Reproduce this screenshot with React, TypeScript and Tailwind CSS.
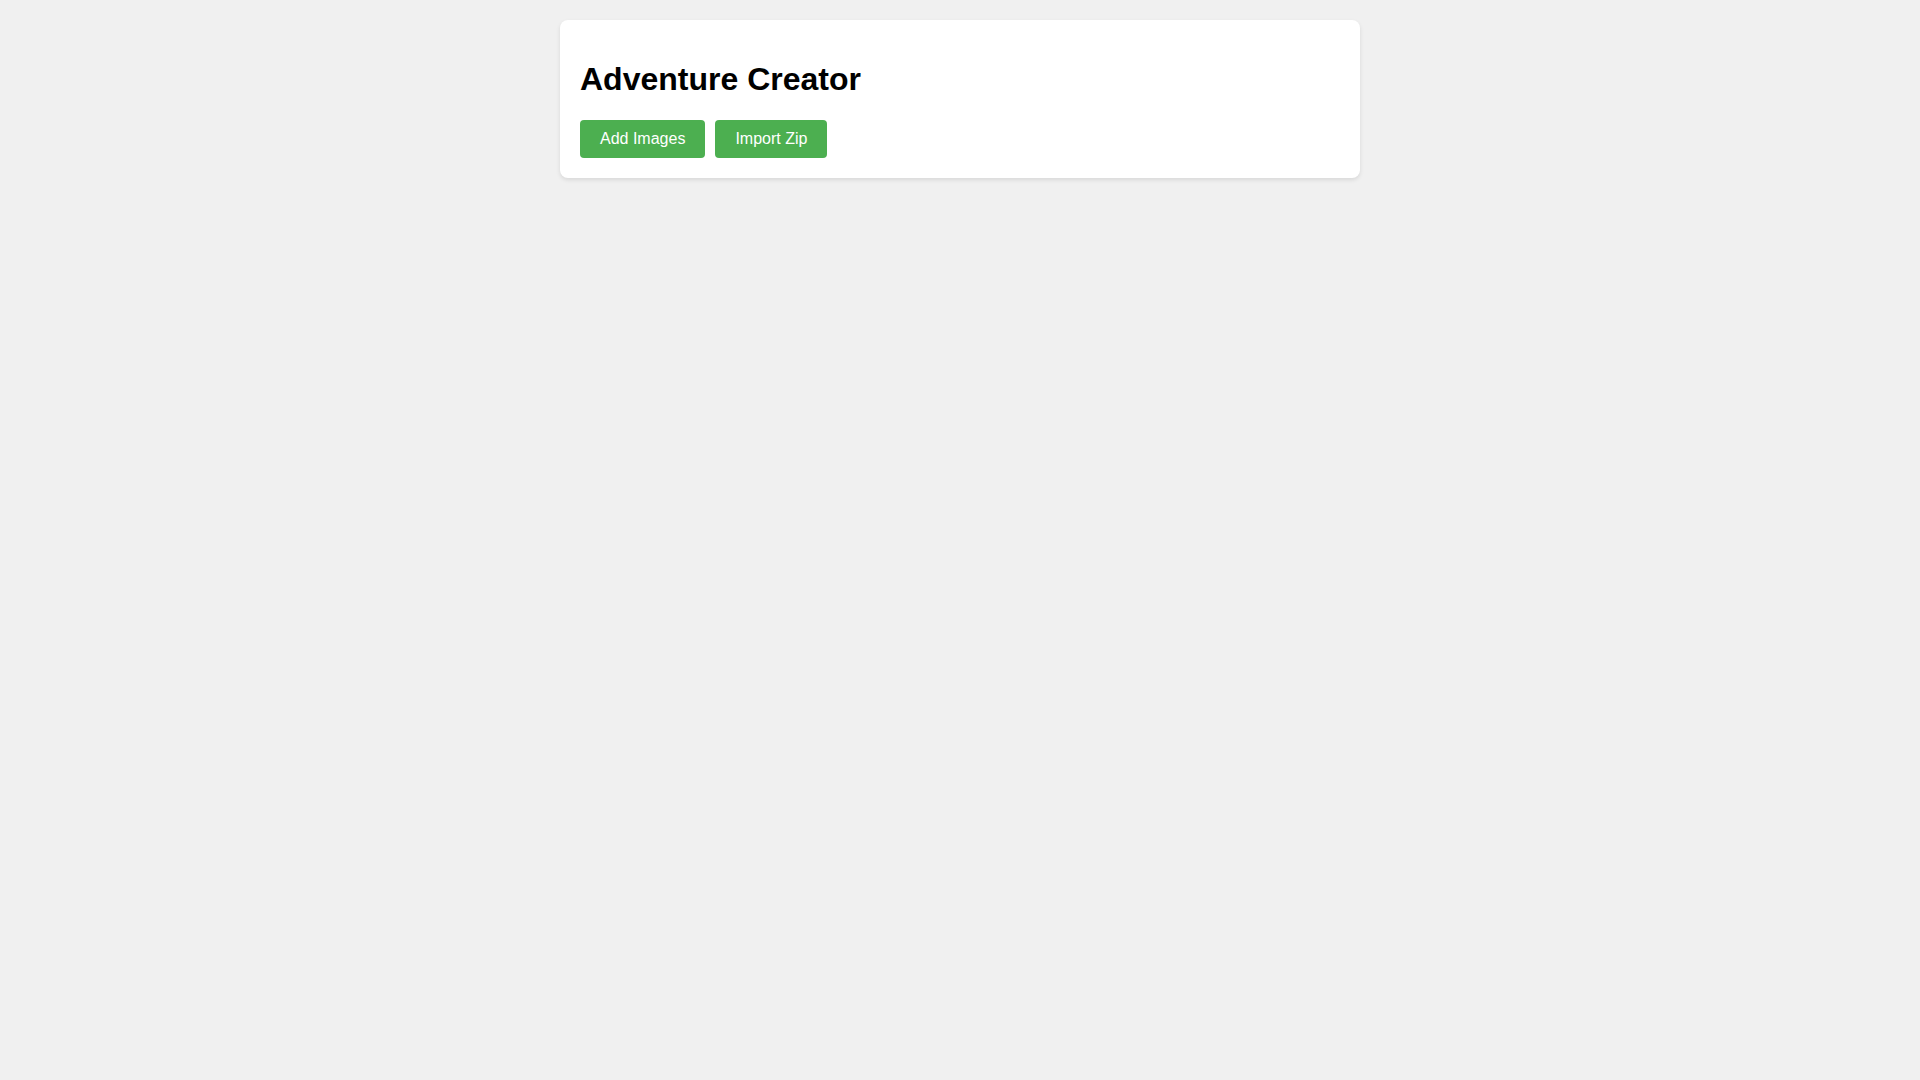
export default function App() {
  return (
    <div className="min-h-screen bg-[#f0f0f0] p-5 font-['Liberation_Sans',Arial,sans-serif]">
      <div className="mx-auto max-w-[800px] rounded-lg bg-white p-5 shadow-[0_2px_4px_rgba(0,0,0,0.1)]">
        <h1 className="my-[21.44px] text-[32px] leading-[normal] font-bold text-black">Adventure Creator</h1>
        <div className="flex gap-2.5">
          <button className="rounded bg-[#4caf50] px-5 py-2.5 text-base leading-[normal] text-white">
            Add Images
          </button>
          <button className="rounded bg-[#4caf50] px-5 py-2.5 text-base leading-[normal] text-white">
            Import Zip
          </button>
        </div>
      </div>
    </div>
  );
}
